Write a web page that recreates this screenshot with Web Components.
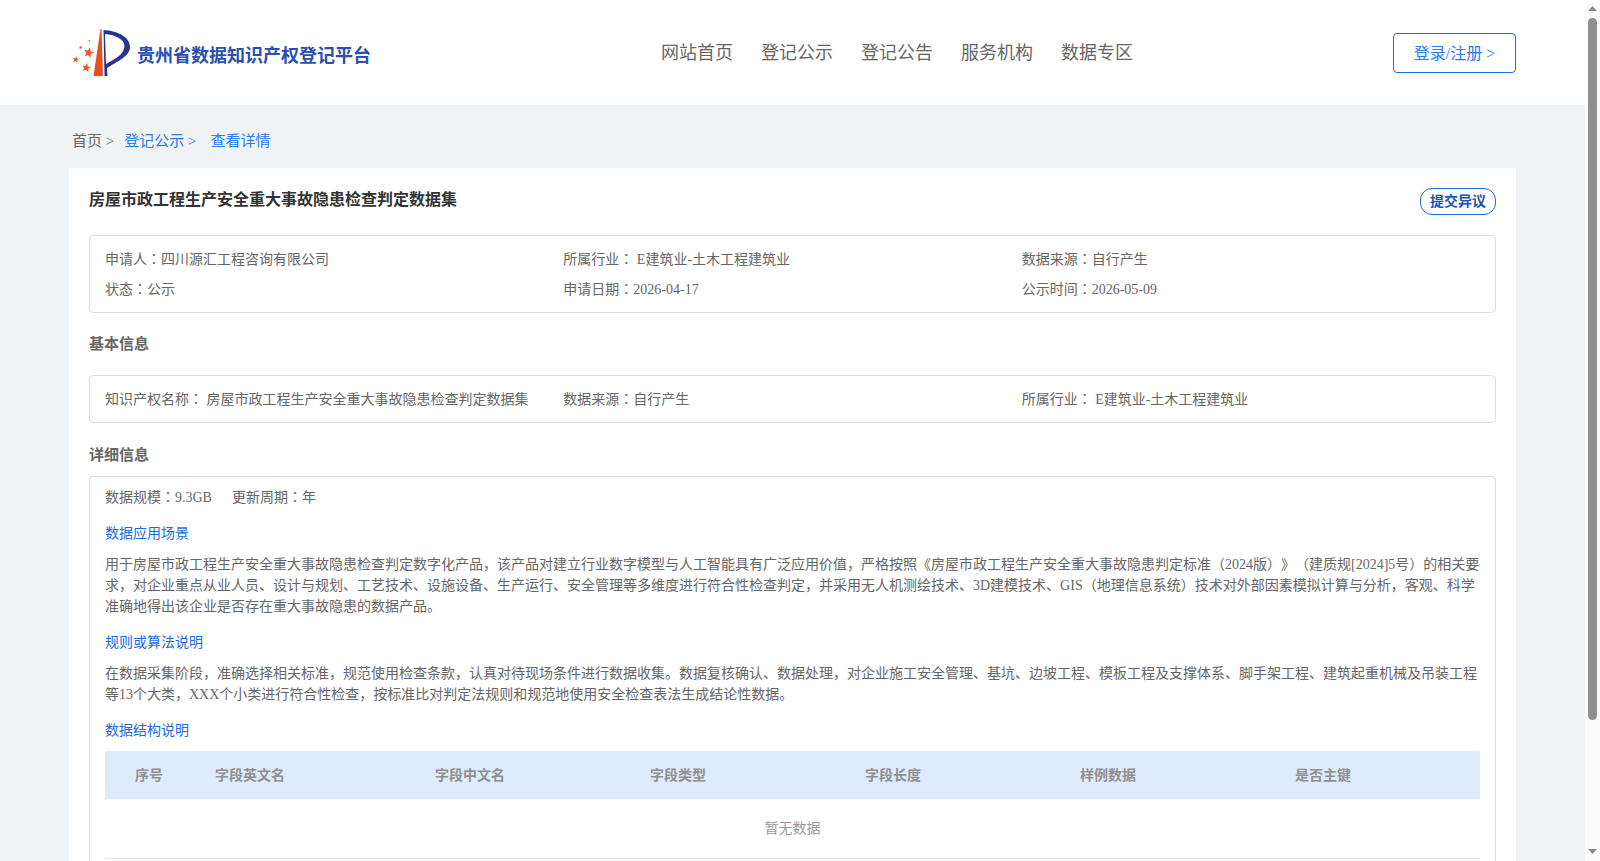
<!DOCTYPE html>
<html lang="zh"><head><meta charset="utf-8"><title>贵州省数据知识产权登记平台</title>
<style>
body{margin:0;padding-right:15px;background:#eff3f6;font-family:"Liberation Serif","Noto Sans CJK SC",serif;font-size:14px;color:#666;text-spacing-trim:space-all}
.c{font-family:"Noto Sans CJK TC",sans-serif;line-height:0}
</style></head><body>
<app-header></app-header>
<page-crumbs></page-crumbs>
<detail-card>
  <card-title title-text="房屋市政工程生产安全重大事故隐患检查判定数据集"></card-title>
  <info-box>
    <span>申请人<span class="c" lang="zh-Hant">：</span>四川源汇工程咨询有限公司</span><span>所属行业<span class="c" lang="zh-Hant">：</span> E建筑业-土木工程建筑业</span><span>数据来源<span class="c" lang="zh-Hant">：</span>自行产生</span>
    <span>状态<span class="c" lang="zh-Hant">：</span>公示</span><span>申请日期<span class="c" lang="zh-Hant">：</span>2026-04-17</span><span>公示时间<span class="c" lang="zh-Hant">：</span>2026-05-09</span>
  </info-box>
  <section-head style="margin-top:20px;margin-bottom:20px">基本信息</section-head>
  <info-box>
    <span>知识产权名称<span class="c" lang="zh-Hant">：</span> 房屋市政工程生产安全重大事故隐患检查判定数据集</span><span>数据来源<span class="c" lang="zh-Hant">：</span>自行产生</span><span>所属行业<span class="c" lang="zh-Hant">：</span> E建筑业-土木工程建筑业</span>
  </info-box>
  <section-head style="margin-top:21px;margin-bottom:10px">详细信息</section-head>
  <detail-box>
    <div class="meta"><span>数据规模<span class="c" lang="zh-Hant">：</span>9.3GB</span><span>更新周期<span class="c" lang="zh-Hant">：</span>年</span></div>
    <blue-head>数据应用场景</blue-head>
    <text-para>用于房屋市政工程生产安全重大事故隐患检查判定数字化产品，该产品对建立行业数字模型与人工智能具有广泛应用价值，严格按照《房屋市政工程生产安全重大事故隐患判定标准（2024版）》（建质规[2024]5号）的相关要求，对企业重点从业人员、设计与规划、工艺技术、设施设备、生产运行、安全管理等多维度进行符合性检查判定，并采用无人机测绘技术、3D建模技术、GIS（地理信息系统）技术对外部因素模拟计算与分析，客观、科学准确地得出该企业是否存在重大事故隐患的数据产品。</text-para>
    <blue-head>规则或算法说明</blue-head>
    <text-para>在数据采集阶段，准确选择相关标准，规范使用检查条款，认真对待现场条件进行数据收集。数据复核确认、数据处理，对企业施工安全管理、基坑、边坡工程、模板工程及支撑体系、脚手架工程、建筑起重机械及吊装工程等13个大类，XXX个小类进行符合性检查，按标准比对判定法规则和规范地使用安全检查表法生成结论性数据。</text-para>
    <blue-head>数据结构说明</blue-head>
    <field-table></field-table>
  </detail-box>
</detail-card>
<page-scrollbar></page-scrollbar>
<script>
function def(name, css, html, extra){
  customElements.define(name, class extends HTMLElement{
    constructor(){super();const r=this.attachShadow({mode:'open'});r.innerHTML='<style>'+css+'</style>'+html;}
    connectedCallback(){extra&&extra.call(this)}
  });
}
function star(cx,cy,r,rot){let p=[];for(let i=0;i<10;i++){const a=(rot+i*36-90)*Math.PI/180,q=i%2?r*.42:r;p.push((cx+q*Math.cos(a)).toFixed(1)+','+(cy+q*Math.sin(a)).toFixed(1));}return '<polygon fill="#ea5526" points="'+p.join(' ')+'"/>';}
def('app-header',`
:host{display:flex;align-items:center;height:105px;background:#fff;padding:0 69px 0 68px;box-sizing:border-box}
.logo{display:flex;align-items:center;gap:1px;width:592px;flex:none;color:#2a4fb0;font:bold 18px "Noto Sans CJK SC",sans-serif}
.logo span{padding-top:3px}
nav{display:flex;gap:28px;flex:1;font-size:18px;color:#666;padding-bottom:4px;padding-left:1px}
button{all:unset;box-sizing:border-box;width:123px;height:40px;border:1px solid #1a6ae0;border-radius:4px;color:#2a7af0;font-size:16px;text-align:center;line-height:40px}
`,`<div class="logo"><svg width="68" height="58" viewBox="0 0 68 58">${star(20.7,28.8,5.5,15)+star(18.3,43.8,4.8,10)+star(7.7,35.5,3.4,10)+star(12.7,23.5,2,0)+star(21.3,16.7,1.3,0)}<path d="M32.500 5L25.500 52 35 52 33.500 5Z" fill="#e84e1b"/><path d="M35.500 6C50 7 62 13 62 23 62 32 50 37 39 44L39.500 52 36.500 52ZM37 10L38 40C47 35 56.500 30 56.500 22 56.500 15 47 11 37 10Z" fill="#28348f" fill-rule="evenodd"/></svg><span>贵州省数据知识产权登记平台</span></div>
<nav><span>网站首页</span><span>登记公示</span><span>登记公告</span><span>服务机构</span><span>数据专区</span></nav>
<button>登录/注册 &gt;</button>`);
def('page-crumbs',`
:host{display:flex;height:63px;align-items:center;padding:5px 0 0 72px;box-sizing:border-box;font-size:15px;color:#666}
a{color:#2a7af0;text-decoration:none}
span{white-space:pre}
`,`<span>首页 &gt;</span><a style="margin-left:10px"><span>登记公示 &gt;</span></a><a style="margin-left:14px">查看详情</a>`);
def('detail-card',`
:host{display:block;background:#fff;margin:0 69px;padding:20px 20px 30px;height:778px;box-sizing:border-box;margin-bottom:68px}
`,`<slot></slot>`);
def('card-title',`
:host{display:flex;justify-content:space-between;align-items:flex-start;margin-bottom:19px;height:28px}
h2{margin:0;font-size:16px;font-weight:bold;color:#333;line-height:24px}
button{all:unset;box-sizing:border-box;width:76px;height:27px;border:1px solid #1a6ae0;border-radius:12px;font-weight:bold;font-size:14px;color:#2152b8;text-align:center;line-height:25px}
`,`<h2></h2><button>提交异议</button>`,function(){this.shadowRoot.querySelector('h2').textContent=this.getAttribute('title-text')});
def('info-box',`
:host{display:grid;grid-template-columns:repeat(3,1fr);row-gap:9px;border:1px solid #ddd;border-radius:4px;padding:13px 15px 12px;box-sizing:border-box;font-size:14px;line-height:21px;color:#666}
`,`<slot></slot>`);
def('section-head',`
:host{display:block;font-size:15px;font-weight:bold;color:#666;line-height:22px}
`,`<slot></slot>`);
def('detail-box',`
:host{display:block;border:1px solid #ddd;border-radius:4px;border-bottom:0;padding:10px 15px 0;min-height:500px;box-sizing:border-box;font-size:14px}
::slotted(.meta){display:flex;gap:20px;line-height:21px;font-size:14px}
`,`<slot></slot>`);
def('blue-head',`
:host{display:block;color:#1a6ae0;font-size:14px;line-height:22px;margin:15px 0 9px}
`,`<slot></slot>`);
def('text-para',`
:host{display:block;font-size:14px;line-height:21px;color:#666}
`,`<slot></slot>`);
const cols=['序号','字段英文名','字段中文名','字段类型','字段长度','样例数据','是否主键'];
def('field-table',`
:host{display:block}
.h{display:grid;grid-template-columns:110px 220px repeat(5,215px);height:48px;box-sizing:border-box;padding-bottom:2px;align-items:center;background:#deebfd;font-weight:bold;font-size:14px;color:#909090}
.h span:first-child{padding-left:30px}
.e{height:60px;box-sizing:border-box;padding-bottom:3px;border-bottom:1px solid #e8e8e8;display:flex;align-items:center;justify-content:center;color:#999;font-size:14px}
`,`<div class="h">${cols.map(c=>'<span>'+c+'</span>').join('')}</div><div class="e">暂无数据</div>`);
def('page-scrollbar',`
:host{position:fixed;top:0;right:0;bottom:0;width:15px;background:#fbfbfb;display:block}
.t{position:absolute;left:3px;top:18px;width:9px;height:702px;border-radius:5px;background:#8f8f8f}
svg{position:absolute;left:3px;width:9px;height:5px;fill:#8a8a8a}
`,`<svg style="top:6px" viewBox="0 0 9 5"><path d="M4.500 0L9 5H0Z"/></svg><div class="t"></div><svg style="top:849px" viewBox="0 0 9 5"><path d="M0 0H9L4.500 5Z"/></svg>`);
</script>
</body></html>
